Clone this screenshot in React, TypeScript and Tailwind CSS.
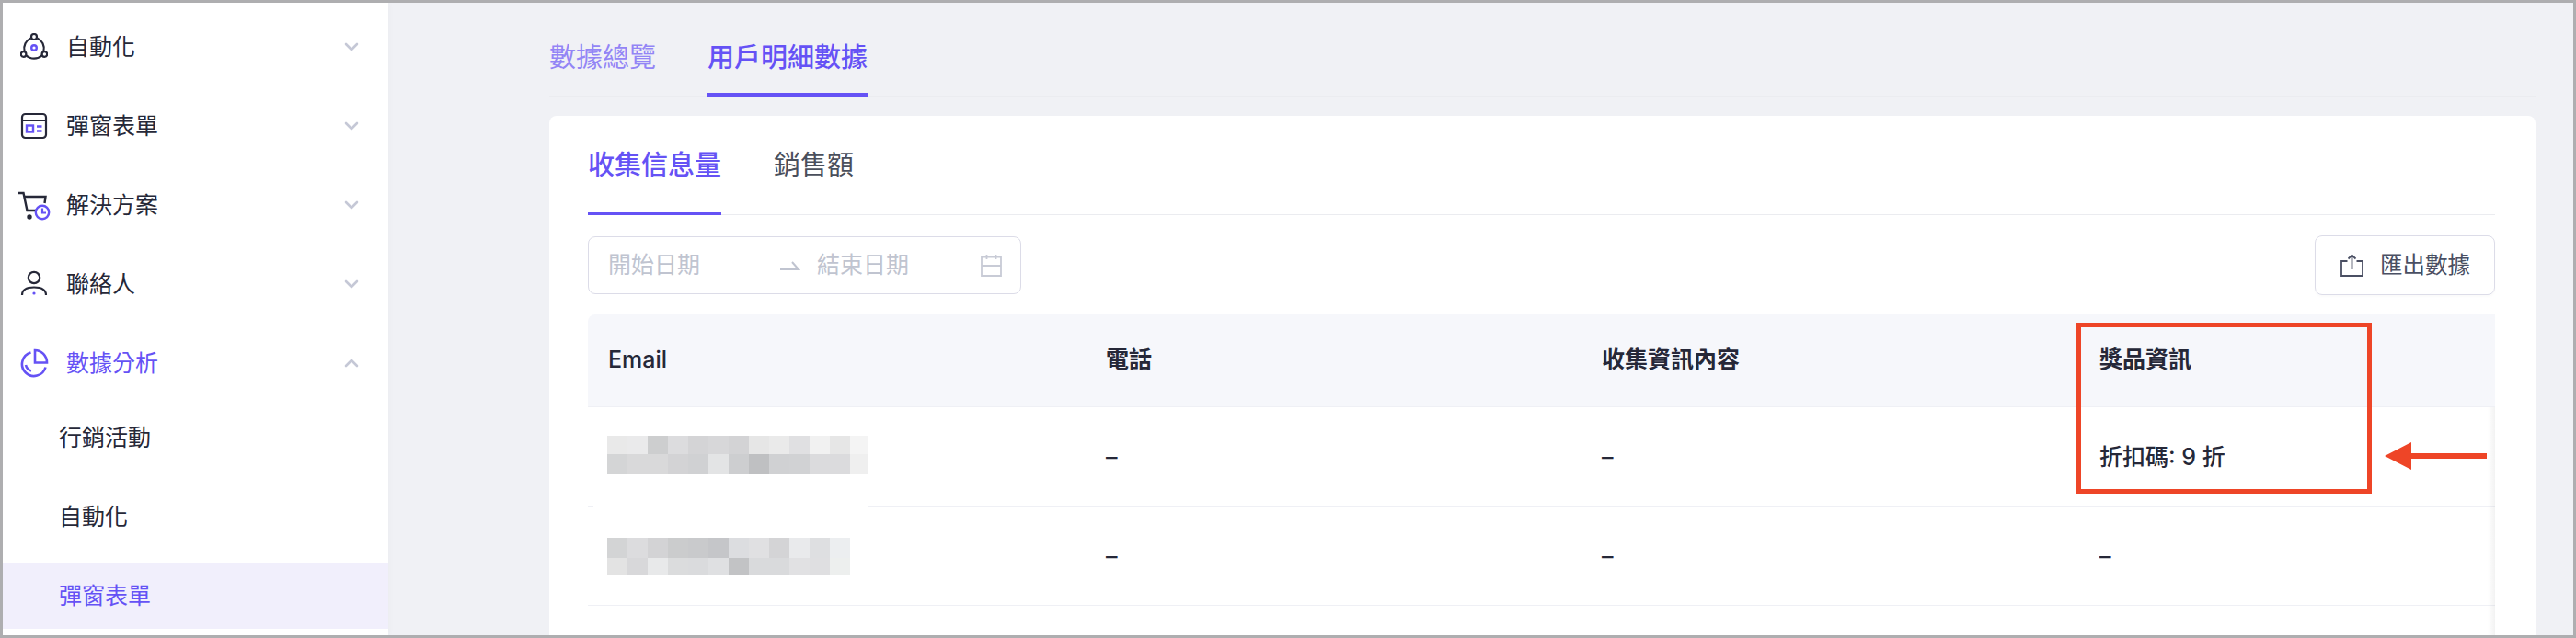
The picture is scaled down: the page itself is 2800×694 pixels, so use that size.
import { ChevronDown, ChevronUp } from 'lucide-react';

const DARK = '#262838';
const PURPLE = '#6552f5';

const AutomationIcon = () => (
  <svg width="30" height="30" viewBox="0 0 30 30" fill="none" stroke={DARK} strokeWidth="2.2">
    <circle cx="15" cy="4" r="3" />
    <circle cx="3.6" cy="23" r="2.8" />
    <circle cx="26.4" cy="23" r="2.8" />
    <circle cx="15" cy="16" r="2.8" stroke={PURPLE} strokeWidth="2.4" />
    <path d="M11.6 5.4A12.5 12.5 0 0 0 4.6 19.8" />
    <path d="M18.4 5.4A12.5 12.5 0 0 1 25.4 19.8" />
    <path d="M6.4 24.2A12.5 12.5 0 0 0 23.6 24.2" />
  </svg>
);

const PopupIcon = () => (
  <svg width="30" height="30" viewBox="0 0 30 30" fill="none">
    <rect x="2" y="2" width="26" height="26" rx="3.5" stroke={DARK} strokeWidth="2.2" />
    <path d="M2 9H28" stroke={DARK} strokeWidth="2" />
    <rect x="7" y="14.5" width="7" height="7" stroke={PURPLE} strokeWidth="2.4" />
    <path d="M18 15.5H23.5M18 20.5H23.5" stroke={PURPLE} strokeWidth="2.4" />
  </svg>
);

const CartIcon = () => (
  <svg width="36" height="32" viewBox="0 0 36 32" fill="none" className="mt-[2px] shrink-0">
    <path d="M1 2H6.5L10.5 21H20" stroke={DARK} strokeWidth="2.4" />
    <path d="M7 6H30.5L29.5 13" stroke={DARK} strokeWidth="2.4" />
    <circle cx="13" cy="28" r="2.7" fill={DARK} />
    <circle cx="27" cy="23" r="7.2" fill="white" stroke={PURPLE} strokeWidth="2.4" />
    <path d="M27 18.5V23.5H31" stroke={PURPLE} strokeWidth="2.2" />
  </svg>
);

const PersonIcon = () => (
  <svg width="30" height="30" viewBox="0 0 30 30" fill="none" stroke={DARK} strokeWidth="2.2">
    <circle cx="15" cy="8" r="6.2" />
    <path d="M2 27C2 21 7 18.5 15 18.5C23 18.5 28 21 28 27" />
    <circle cx="15" cy="25" r="1.6" fill={PURPLE} stroke="none" />
  </svg>
);

const PieIcon = () => (
  <svg width="32" height="32" viewBox="0 0 32 32" fill="none" stroke={PURPLE} strokeWidth="2.6" className="shrink-0">
    <path d="M12.5 4.5A13 13 0 1 0 28.5 20.5" />
    <path d="M17 2C24 2 30 8 30 15.5H17Z" />
    <path d="M7 18C7.8 21.5 10 23.5 13 24.5" />
  </svg>
);

const CalendarIcon = () => (
  <svg width="23" height="25" viewBox="0 0 23 25" fill="none" stroke="#c8cbd6" strokeWidth="1.8">
    <path d="M1 3.5H22V24H1Z" />
    <path d="M1 13H22M6.5 1V6M16.5 1V6" />
  </svg>
);

const ExportIcon = () => (
  <svg width="25" height="25" viewBox="0 0 25 25" fill="none" stroke="#4a4f63" strokeWidth="1.8">
    <path d="M7.5 8H1V24H24V8H17.5" />
    <path d="M12.5 17V1.5M8.5 5.5L12.5 1.5L16.5 5.5" />
  </svg>
);

const menu = [
  { label: '自動化', icon: <AutomationIcon /> },
  { label: '彈窗表單', icon: <PopupIcon /> },
  { label: '解決方案', icon: <CartIcon /> },
  { label: '聯絡人', icon: <PersonIcon /> },
];

const mosaicA = [
  ['bg-[#e9e9e9]', 'bg-[#eaeaeb]', 'bg-[#cdcecf]', 'bg-[#dcdcde]', 'bg-[#d4d4d6]', 'bg-[#d7d7d9]', 'bg-[#d3d3d5]', 'bg-[#e6e6e6]', 'bg-[#eaeaea]', 'bg-[#e0e0e2]', 'bg-[#f1f1f1]', 'bg-[#e6e6e6]', 'bg-[#f4f4f4]'],
  ['bg-[#d4d5d6]', 'bg-[#d9d9da]', 'bg-[#d9d9da]', 'bg-[#d3d3d5]', 'bg-[#d0d1d3]', 'bg-[#e3e4e5]', 'bg-[#cdced0]', 'bg-[#bfc0c2]', 'bg-[#d0d1d3]', 'bg-[#d1d2d4]', 'bg-[#dbdbdd]', 'bg-[#dbdbdd]', 'bg-[#efefef]'],
];

const mosaicB = [
  ['bg-[#d3d4d5]', 'bg-[#dcdcde]', 'bg-[#d3d3d5]', 'bg-[#cbcccd]', 'bg-[#c9cacc]', 'bg-[#c5c6c9]', 'bg-[#dcdde0]', 'bg-[#e0e0e2]', 'bg-[#d4d4d6]', 'bg-[#e9eaec]', 'bg-[#dedfe1]', 'bg-[#eceef0]'],
  ['bg-[#e3e3e3]', 'bg-[#d8d8da]', 'bg-[#e8e9ea]', 'bg-[#dbdcdd]', 'bg-[#dadbdd]', 'bg-[#dfe0e2]', 'bg-[#c2c3c5]', 'bg-[#d9dadc]', 'bg-[#d9dadc]', 'bg-[#e1e1e3]', 'bg-[#dfdfe1]', 'bg-[#edefee]'],
];

const MosaicRow = ({ cells, className }: { cells: string[]; className: string }) => (
  <div className={`flex overflow-hidden ${className}`}>
    {cells.map((c, i) => (
      <div key={i} className={`h-full w-[22px] shrink-0 ${c}`} />
    ))}
  </div>
);

const App = () => {
  return (
    <div className="relative flex h-[694px] w-[2800px] overflow-hidden border-[3px] border-[#aeaeb0] bg-[#f0f1f5] font-['Inter','Noto_Sans_CJK_TC',sans-serif] text-[#262838]">
      {/* Sidebar */}
      <aside className="flex w-[419px] shrink-0 flex-col bg-white pt-[12px] text-[25px] leading-[36px] shadow-[2px_0_6px_rgba(0,0,0,0.02)]">
        <div className="flex flex-col gap-[14px]">
          {menu.map((item) => (
            <div key={item.label} className="flex h-[72px] items-center pl-[19px] pr-[33px]">
              <div className="flex w-[30px] shrink-0 justify-center">{item.icon}</div>
              <span className="ml-[20px] flex-1">{item.label}</span>
              <ChevronDown size={24} strokeWidth={2.6} className="-mr-[5px] text-[#c5c8d6]" />
            </div>
          ))}
          <div className="flex h-[72px] items-center pl-[19px] pr-[33px] text-[#6552f5]">
            <div className="flex w-[30px] shrink-0 justify-center"><PieIcon /></div>
            <span className="ml-[20px] flex-1">數據分析</span>
            <ChevronUp size={24} strokeWidth={2.6} className="-mr-[5px] text-[#c5c8d6]" />
          </div>
        </div>
        <div className="mt-[9px] flex flex-col gap-[14px]">
          <div className="flex h-[72px] items-center pl-[61px]">行銷活動</div>
          <div className="flex h-[72px] items-center pl-[61px]">自動化</div>
          <div className="flex h-[72px] items-center bg-[#f1effc] pl-[61px] text-[#6552f5]">彈窗表單</div>
        </div>
      </aside>

      {/* Main */}
      <main className="flex min-w-0 flex-1 flex-col pl-[175px] pr-[41px]">
        <div className="flex gap-[56px] border-b border-[#ebecf0] text-[29px] leading-[40px]">
          <div className="-mb-px pb-[22px] pt-[40px] text-[#9385f5]">數據總覽</div>
          <div className="-mb-px border-b-4 border-[#6552f5] pb-[18px] pt-[40px] font-medium text-[#6552f5]">用戶明細數據</div>
        </div>

        <section className="mt-[21px] flex-1 overflow-hidden rounded-t-lg bg-white pl-[42px] pr-[44px]">
          <div className="flex gap-[57px] border-b border-[#ebecf0] text-[29px] leading-[40px]">
            <div className="-mb-px border-b-[3px] border-[#6552f5] pb-[31px] pt-[34px] font-medium text-[#6552f5]">收集信息量</div>
            <div className="-mb-px pb-[34px] pt-[34px] text-[#4a4f5c]">銷售額</div>
          </div>

          <div className="mt-[22px] flex h-[65px] items-center justify-between">
            <div className="flex h-[63px] w-[471px] items-center rounded-lg border border-[#dcdce8] pl-[21px] pr-[20px] text-[25px] text-[#c0c4d0]">
              <span>開始日期</span>
              <svg width="22" height="12" viewBox="0 0 22 12" fill="none" stroke="#c0c4d0" strokeWidth="2" className="ml-[87px]">
                <path d="M0 10H20L13 2" />
              </svg>
              <span className="ml-[18px]">結束日期</span>
              <div className="ml-auto"><CalendarIcon /></div>
            </div>
            <button className="flex h-[65px] w-[196px] items-center gap-[18px] rounded-lg border border-[#dcdce8] pl-[27px] text-[24.5px] text-[#4a4f63] shadow-[0_2px_3px_rgba(0,0,0,0.02)]">
              <ExportIcon />
              <span>匯出數據</span>
            </button>
          </div>

          {/* Table */}
          <div className="relative mt-[21px] text-[25px] font-medium leading-[36px]">
            <div className="grid h-[101px] grid-cols-[541px_539px_541px_452px] items-center rounded-tl-lg border-b border-[#eff0f5] bg-[#f6f7fb] pb-[3px] font-semibold">
              <div className="pl-[22px] font-medium">Email</div>
              <div className="pl-[22px]">電話</div>
              <div className="pl-[22px]">收集資訊內容</div>
              <div className="pl-[22px]">獎品資訊</div>
            </div>
            <div className="relative grid h-[108px] grid-cols-[541px_539px_541px_452px] items-center border-b border-[#eff0f5]">
              <div className="flex flex-col pb-[4px] pl-[21px]">
                <MosaicRow cells={mosaicA[0]} className="h-[20px] w-[283px]" />
                <MosaicRow cells={mosaicA[1]} className="h-[22px] w-[283px]" />
              </div>
              <div className="pl-[22px]">–</div>
              <div className="pl-[22px]">–</div>
              <div className="pl-[22px]">折扣碼: 9 折</div>
              {/* white smear left by the blur over the row line */}
              <div className="absolute -bottom-[8px] left-[6px] h-[16px] w-[298px] rounded-[6px] bg-white" />
            </div>
            <div className="grid h-[108px] grid-cols-[541px_539px_541px_452px] items-center border-b border-[#eff0f5]">
              <div className="flex flex-col pl-[21px]">
                <MosaicRow cells={mosaicB[0]} className="h-[22px] w-[264px]" />
                <MosaicRow cells={mosaicB[1]} className="h-[18px] w-[264px]" />
              </div>
              <div className="pl-[22px]">–</div>
              <div className="pl-[22px]">–</div>
              <div className="pl-[22px]">–</div>
            </div>
            <div className="absolute bottom-[-40px] right-0 top-[101px] w-[8px] bg-gradient-to-r from-transparent to-black/5" />
          </div>
        </section>
      </main>

      {/* Annotation */}
      <div className="absolute left-[2254px] top-[348px] h-[186px] w-[321px] border-[5px] border-[#ee4527]" />
      <svg width="112" height="30" viewBox="0 0 112 30" className="absolute left-[2589px] top-[478px]">
        <path d="M0 15L29 0V12H111V18H29V30Z" fill="#ee4527" />
      </svg>
    </div>
  );
};

export default App;
